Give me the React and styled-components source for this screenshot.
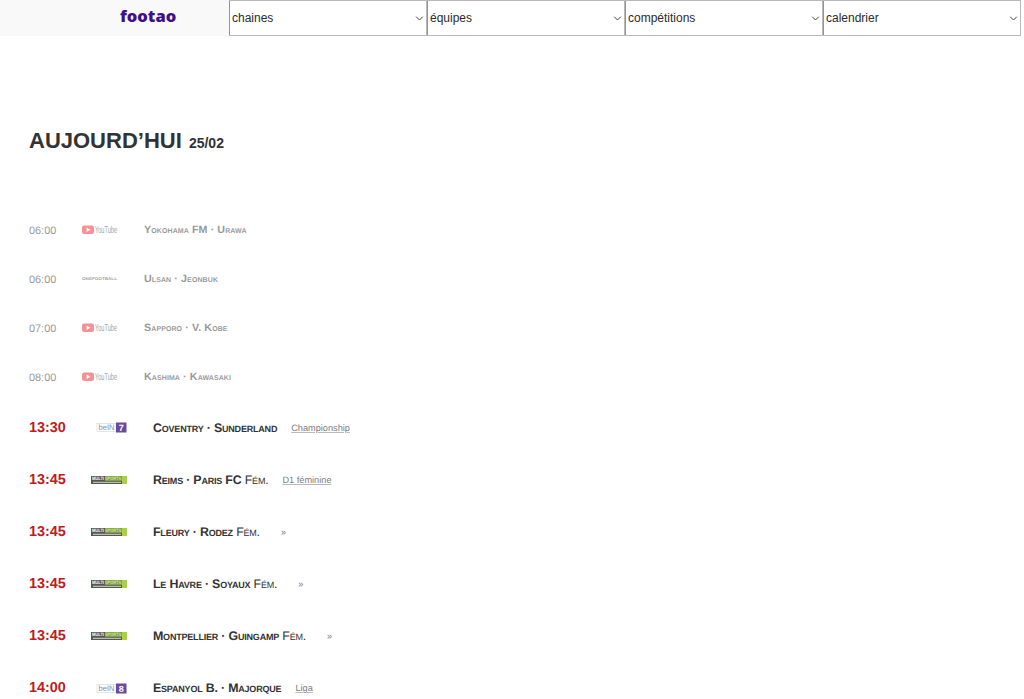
import React from "react";
import styled, { createGlobalStyle } from "styled-components";

const GlobalStyle = createGlobalStyle`
  html, body {
    margin: 0;
    padding: 0;
    background: #ffffff;
    font-family: "Liberation Sans", Arial, sans-serif;
    color: #333333;
    overflow: hidden;
  }
`;

const Page = styled.div`
  width: 1024px;
  height: 699px;
  overflow: hidden;
`;

const Header = styled.header`
  display: flex;
  height: 36px;
`;

const LogoBox = styled.div`
  width: 229px;
  height: 36px;
  padding-left: 120px;
  box-sizing: border-box;
  background: #f9f9f9;
  font-family: "Open Sans", sans-serif;
  font-size: 16.5px;
  font-weight: 800;
  line-height: 31px;
  color: #3f0f8c;
`;

const Dropdown = styled.div`
  position: relative;
  width: 198px;
  height: 36px;
  box-sizing: border-box;
  border: 1px solid #b8b8b8;
  border-left-color: #949494;
  border-radius: 1px;
  background: #ffffff;
  padding-left: 2px;
  font-size: 12px;
  line-height: 34px;
  color: #2b2b2b;

  svg {
    position: absolute;
    top: 14px;
    right: 2px;
  }
`;

const Title = styled.h1`
  margin: 0;
  padding: 91px 0 48px 29px;
  font-size: 22px;
  line-height: 28px;
  font-weight: 700;
  color: #333333;

  small {
    margin-left: 1px;
    font-size: 14px;
  }
`;

const List = styled.div`
  display: flex;
  flex-direction: column;
`;

const Row = styled.div`
  display: flex;
  align-items: center;
  flex: none;
  height: ${(p) => (p.$past ? 49 : p.$tall ? 53 : 52)}px;
  padding-left: 29px;
  opacity: ${(p) => (p.$past ? 0.5 : 1)};
  font-variant: small-caps;
  text-rendering: geometricPrecision;
`;

const Time = styled.div`
  width: ${(p) => (p.$past ? 53 : 62)}px;
  padding-top: ${(p) => (p.$past ? 2 : 0)}px;
  font-variant: normal;
  font-size: ${(p) => (p.$past ? 10.9 : 14.4)}px;
  font-weight: ${(p) => (p.$past ? 400 : 700)};
  color: ${(p) => (p.$past ? "#333333" : "#c01b20")};
`;

const Channel = styled.div`
  display: flex;
  width: 36px;
  margin-right: 26px;
  font-variant: normal;

  svg {
    overflow: visible;
  }
`;

const Match = styled.div`
  font-size: ${(p) => (p.$past ? 10.7 : 12.4)}px;
  letter-spacing: ${(p) => (p.$past ? 0.1 : -0.2)}px;
  font-weight: 700;
  color: #333333;
  white-space: nowrap;

  span {
    font-weight: 400;
  }
`;

const Competition = styled.a`
  margin-left: ${(p) => (p.$ditto ? 21 : 14)}px;
  font-variant: normal;
  font-size: 9.2px;
  color: #7d7d7d;
  text-decoration: ${(p) => (p.$ditto ? "none" : "underline")};
  text-decoration-color: #bbbbbb;
`;

const Chevron = () => (
  <svg width="9" height="7" viewBox="0 0 9 7">
    <path d="M1.2 1.7 L4.5 5 L7.8 1.7" fill="none" stroke="#444444" strokeWidth="1" />
  </svg>
);

const YoutubeLogo = () => (
  <svg width="36" height="10" viewBox="0 0 36 10">
    <rect x="0" y="0.5" width="12" height="8.5" rx="2.2" fill="#e8252b" />
    <path d="M4.6 2.6 L8.4 4.75 L4.6 6.9 Z" fill="#ffffff" />
    <text x="13" y="8.4" fontFamily="Liberation Sans, sans-serif" fontSize="10" textLength="22" lengthAdjust="spacingAndGlyphs" fill="#444444">
      YouTube
    </text>
  </svg>
);

const OnefootballLogo = () => (
  <svg width="36" height="6" viewBox="0 0 36 6">
    <text x="0" y="4" fontFamily="Liberation Sans, sans-serif" fontWeight="700" fontSize="4" textLength="35" lengthAdjust="spacingAndGlyphs" fill="#444444">
      ONEFOOTBALL
    </text>
  </svg>
);

const BeinLogo = ({ n }) => (
  <svg width="36" height="11" viewBox="0 0 36 11">
    <g transform="translate(5.5 0)">
      <rect x="0.5" y="1.5" width="19" height="8" fill="#ffffff" stroke="#d4d4d4" strokeWidth="0.6" />
      <text x="2" y="8" fontFamily="Liberation Sans, sans-serif" fontSize="8" textLength="16" lengthAdjust="spacingAndGlyphs" fill="#8c8c9c">
        beIN
      </text>
      <rect x="19.5" y="0.5" width="10.5" height="10" fill="#6a4a9c" />
      <text x="24.7" y="8.8" textAnchor="middle" fontFamily="Liberation Sans, sans-serif" fontWeight="700" fontSize="9" fill="#ffffff">
        {n}
      </text>
    </g>
  </svg>
);

const MultisportsLogo = () => (
  <svg width="36" height="8" viewBox="0 0 36 8">
    <rect x="0" y="0" width="36" height="8" fill="#55584c" />
    <rect x="14" y="0" width="18" height="5" fill="#7fa33f" />
    <rect x="31" y="0" width="5" height="8" fill="#a9cf4a" />
    <text x="1" y="4.4" fontFamily="Liberation Sans, sans-serif" fontWeight="700" fontSize="4.6" textLength="12" lengthAdjust="spacingAndGlyphs" fill="#ffffff">
      MULTI
    </text>
    <text x="14" y="4.4" fontFamily="Liberation Sans, sans-serif" fontSize="4.6" textLength="16" lengthAdjust="spacingAndGlyphs" fill="#e4f2b8">
      SPORTS
    </text>
    <rect x="2" y="5.8" width="28" height="1" fill="#d5d5d5" />
  </svg>
);

const logos = {
  yt: <YoutubeLogo />,
  one: <OnefootballLogo />,
  bein7: <BeinLogo n="7" />,
  bein8: <BeinLogo n="8" />,
  multi: <MultisportsLogo />,
};

const matches = [
  { time: "06:00", logo: "yt", name: "Yokohama FM · Urawa", past: true },
  { time: "06:00", logo: "one", name: "Ulsan · Jeonbuk", past: true },
  { time: "07:00", logo: "yt", name: "Sapporo · V. Kobe", past: true },
  { time: "08:00", logo: "yt", name: "Kashima · Kawasaki", past: true },
  { time: "13:30", logo: "bein7", name: "Coventry · Sunderland", comp: "Championship", tall: true },
  { time: "13:45", logo: "multi", name: "Reims · Paris FC", fem: true, comp: "D1 féminine" },
  { time: "13:45", logo: "multi", name: "Fleury · Rodez", fem: true, comp: "»" },
  { time: "13:45", logo: "multi", name: "Le Havre · Soyaux", fem: true, comp: "»" },
  { time: "13:45", logo: "multi", name: "Montpellier · Guingamp", fem: true, comp: "»" },
  { time: "14:00", logo: "bein8", name: "Espanyol B. · Majorque", comp: "Liga" },
];

const menus = ["chaines", "équipes", "compétitions", "calendrier"];

export default function App() {
  return (
    <Page>
      <GlobalStyle />
      <Header>
        <LogoBox>footao</LogoBox>
        {menus.map((label) => (
          <Dropdown key={label}>
            {label}
            <Chevron />
          </Dropdown>
        ))}
      </Header>
      <Title>
        AUJOURD’HUI <small>25/02</small>
      </Title>
      <List>
        {matches.map((m, i) => (
          <Row key={i} $past={m.past} $tall={m.tall}>
            <Time $past={m.past}>{m.time}</Time>
            <Channel>{logos[m.logo]}</Channel>
            <Match $past={m.past}>
              {m.name}
              {m.fem && <span> Fém.</span>}
            </Match>
            {m.comp && <Competition $ditto={m.comp === "»"}>{m.comp}</Competition>}
          </Row>
        ))}
      </List>
    </Page>
  );
}
